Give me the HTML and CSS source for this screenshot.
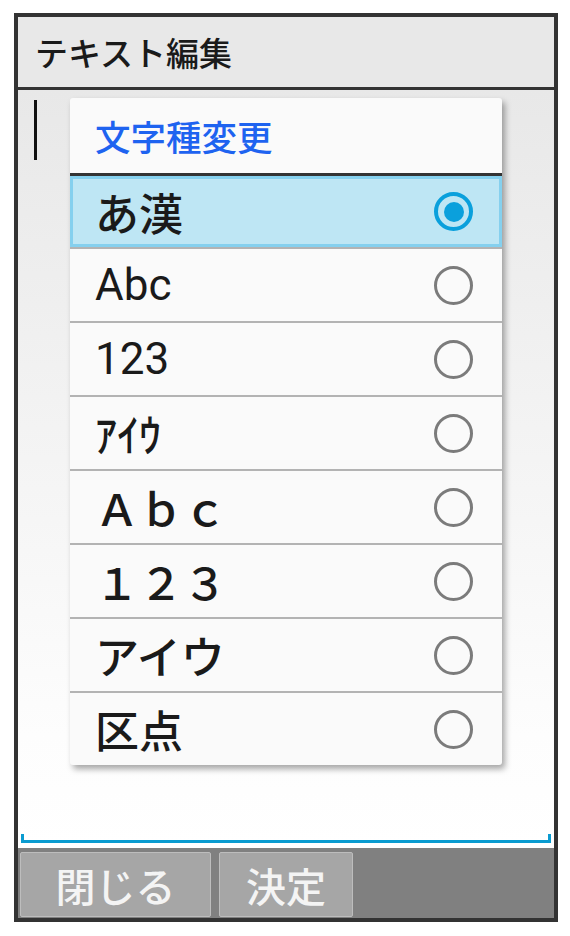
FILE: index.html
```html
<!DOCTYPE html>
<html lang="ja">
<head>
    <meta charset="UTF-8">
    <meta name="viewport" content="width=device-width, initial-scale=1.0">
    <title>テキスト編集</title>
    <link rel="stylesheet" href="styles.css">
</head>
<body>
    <div class="phone">
        <div class="header">テキスト編集</div>

        <div class="content">
            <div class="cursor"></div>
            <div class="underline"></div>

            <!-- 文字種変更 dialog -->
            <div class="dialog">
                <div class="dialog-title">文字種変更</div>
                <div class="opt on"><span>あ漢</span><span class="radio"></span></div>
                <div class="opt"><span class="latin">Abc</span><span class="radio"></span></div>
                <div class="opt"><span class="latin">123</span><span class="radio"></span></div>
                <div class="opt"><span>ｱｲｳ</span><span class="radio"></span></div>
                <div class="opt"><span>Ａｂｃ</span><span class="radio"></span></div>
                <div class="opt"><span>１２３</span><span class="radio"></span></div>
                <div class="opt"><span>アイウ</span><span class="radio"></span></div>
                <div class="opt"><span>区点</span><span class="radio"></span></div>
            </div>
        </div>

        <div class="softkeys">
            <button class="key key-wide">閉じる</button>
            <button class="key">決定</button>
        </div>
    </div>
</body>
</html>
```

FILE: styles.css
```css
body {
    margin: 0;
    background: #fff;
    font-family: Roboto, "Noto Sans CJK JP", sans-serif;
    font-weight: 500;
    color: #1a1a1a;
}

.phone {
    width: 544px;
    margin: 13px 0 0 14px;
    border: 4px solid #333;
    box-sizing: border-box;
    display: flex;
    flex-direction: column;
}

.header {
    height: 70px;
    background: #e8e8e8;
    border-bottom: 3px solid #333;
    padding-left: 17px;
    font-size: 33px;
    display: flex;
    align-items: center;
}

.content {
    position: relative;
    height: 758px;
    background: linear-gradient(180deg, #e8e8e8 0%, #fdfdfd 85%, #fff 100%);
    display: flex;
    flex-direction: column;
}

.cursor {
    width: 3px;
    height: 60px;
    margin: 10px 0 0 16px;
    background: #111;
}

.underline {
    margin: auto 3px 5px 3px;
    height: 6px;
    border: 3px solid #0a9bd0;
    border-top: none;
}

.dialog {
    position: absolute;
    top: 8px;
    left: 52px;
    width: 432px;
    background: #fafafa;
    border-radius: 3px;
    box-shadow: 3px 4px 6px rgba(0, 0, 0, 0.35);
}

.dialog-title {
    height: 75px;
    padding-left: 25px;
    border-bottom: 3px solid #333;
    color: #1e63f0;
    font-size: 35.5px;
    display: flex;
    align-items: center;
}

.opt {
    height: 74px;
    box-sizing: border-box;
    border-bottom: 2px solid #b3b3b3;
    padding: 0 29px 0 25px;
    font-size: 44px;
    display: flex;
    align-items: center;
    justify-content: space-between;
}

.opt:last-child {
    height: 72px;
    border-bottom: none;
}

.opt.on {
    height: 73px;
    background: #bee6f4;
    box-shadow: inset 0 0 0 3px #85d0ee;
}

.latin {
    font-weight: 400;
}

.radio {
    width: 39px;
    height: 39px;
    box-sizing: border-box;
    border-radius: 50%;
    border: 3.5px solid #7b7b7b;
    display: flex;
    align-items: center;
    justify-content: center;
}

.opt.on .radio {
    border: 4.5px solid #0aa0dc;
}

.opt.on .radio::after {
    content: "";
    width: 20px;
    height: 20px;
    border-radius: 50%;
    background: #0aa0dc;
}

.softkeys {
    height: 70px;
    background: #808080;
    box-sizing: border-box;
    padding: 4px 2px 1px 2px;
    display: flex;
    gap: 8px;
}

.key {
    width: 134px;
    height: 65px;
    margin: 0;
    padding: 0;
    background: #a6a6a6;
    border: 1px solid #bdbdbd;
    border-radius: 2px;
    color: #f4f4f4;
    font-family: Roboto, "Noto Sans CJK JP", sans-serif;
    font-weight: 500;
    font-size: 40px;
}

.key-wide {
    width: 191px;
}
```
